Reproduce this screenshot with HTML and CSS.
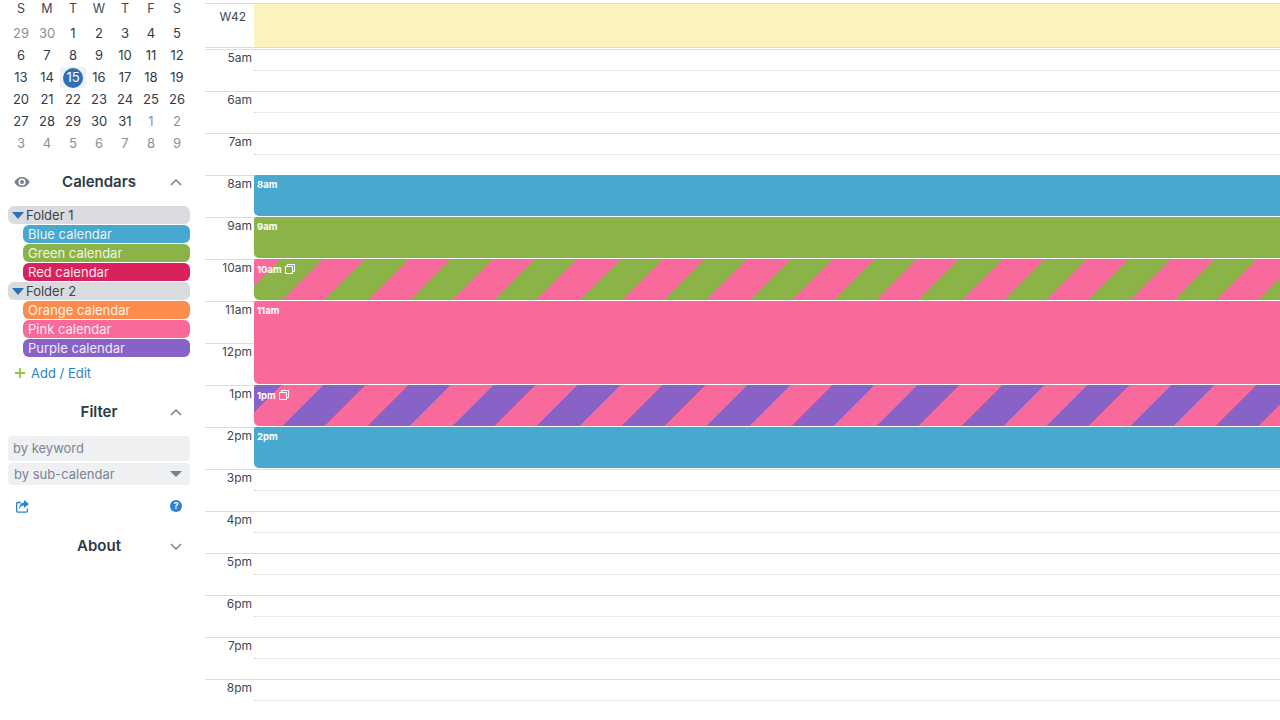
FILE: index.html
```html
<!DOCTYPE html>
<html lang="en">
<head>
<meta charset="utf-8">
<title>Calendar</title>
<link rel="stylesheet" href="styles.css">
</head>
<body>
<div class="app">
  <aside class="sidebar">
    <div class="mini-head"><span>S</span><span>M</span><span>T</span><span>W</span><span>T</span><span>F</span><span>S</span></div>
    <div class="mini-grid">
      <span class="off">29</span><span class="off">30</span><span>1</span><span>2</span><span>3</span><span>4</span><span>5</span>
      <span>6</span><span>7</span><span>8</span><span>9</span><span>10</span><span>11</span><span>12</span>
      <span>13</span><span>14</span><span class="today"><b>15</b></span><span>16</span><span>17</span><span>18</span><span>19</span>
      <span>20</span><span>21</span><span>22</span><span>23</span><span>24</span><span>25</span><span>26</span>
      <span>27</span><span>28</span><span>29</span><span>30</span><span>31</span><span class="off">1</span><span class="off">2</span>
      <span class="off">3</span><span class="off">4</span><span class="off">5</span><span class="off">6</span><span class="off">7</span><span class="off">8</span><span class="off">9</span>
    </div>

    <div class="panel-head calendars-head">
      <svg class="eye" width="16" height="10" viewBox="0 0 16 10"><path fill="#76808f" fill-rule="evenodd" d="M8 0C4.600 0 1.800 2 .3 5c1.500 3 4.300 5 7.700 5s6.200-2 7.700-5C14.200 2 11.400 0 8 0zm0 8.600A3.600 3.600 0 1 1 8 1.400a3.600 3.600 0 0 1 0 7.200zM8 3a2 2 0 1 0 0 4 2 2 0 0 0 0-4z"/></svg>
      <h2>Calendars</h2>
      <svg class="chev" width="12" height="7" viewBox="0 0 12 7"><path d="M1 6l5-5 5 5" fill="none" stroke="#76808f" stroke-width="1.500"/></svg>
    </div>

    <ul class="cal-list">
      <li class="folder"><i class="caret"></i>Folder 1</li>
      <li class="cal blue">Blue calendar</li>
      <li class="cal green">Green calendar</li>
      <li class="cal red">Red calendar</li>
      <li class="folder"><i class="caret"></i>Folder 2</li>
      <li class="cal orange">Orange calendar</li>
      <li class="cal pink">Pink calendar</li>
      <li class="cal purple">Purple calendar</li>
    </ul>

    <div class="add-edit">
      <svg width="10" height="10" viewBox="0 0 10 10"><path d="M5 0v10M0 5h10" stroke="#8cc63f" stroke-width="1.800"/></svg>
      <span>Add / Edit</span>
    </div>

    <div class="panel-head filter-head">
      <h2>Filter</h2>
      <svg class="chev" width="12" height="7" viewBox="0 0 12 7"><path d="M1 6l5-5 5 5" fill="none" stroke="#76808f" stroke-width="1.500"/></svg>
    </div>

    <div class="keyword">by keyword</div>
    <div class="subcal">by sub-calendar<i class="caret-gray"></i></div>

    <div class="tools">
      <svg width="13" height="13" viewBox="0 0 13 13"><path d="M5 2.500H1.500a.8.8 0 0 0-.8.800v8a.8.8 0 0 0 .8.800h9a.8.8 0 0 0 .8-.800V8.500" fill="none" stroke="#2a82d0" stroke-width="1.300"/><path fill="#2a82d0" d="M8 0l5 4-5 4V5.600C5.800 5.600 4.200 6.400 3.300 9.500 3 5.400 4.800 2.700 8 2.400z"/></svg>
      <span class="help">?</span>
    </div>

    <div class="panel-head about-head">
      <h2>About</h2>
      <svg class="chev" width="12" height="7" viewBox="0 0 12 7"><path d="M1 1l5 5 5-5" fill="none" stroke="#76808f" stroke-width="1.500"/></svg>
    </div>
  </aside>

  <main class="main">
    <div class="allday">
      <div class="week">W42</div>
      <div class="allday-band"></div>
    </div>
    <div class="hours">
      <div class="hour"><span>5am</span><i></i></div>
      <div class="hour"><span>6am</span><i></i></div>
      <div class="hour"><span>7am</span><i></i></div>
      <div class="hour"><span>8am</span><i></i></div>
      <div class="hour"><span>9am</span><i></i></div>
      <div class="hour"><span>10am</span><i></i></div>
      <div class="hour"><span>11am</span><i></i></div>
      <div class="hour"><span>12pm</span><i></i></div>
      <div class="hour"><span>1pm</span><i></i></div>
      <div class="hour"><span>2pm</span><i></i></div>
      <div class="hour"><span>3pm</span><i></i></div>
      <div class="hour"><span>4pm</span><i></i></div>
      <div class="hour"><span>5pm</span><i></i></div>
      <div class="hour"><span>6pm</span><i></i></div>
      <div class="hour"><span>7pm</span><i></i></div>
      <div class="hour"><span>8pm</span><i></i></div>
      <div class="events">
        <div class="event ev-blue">8am</div>
        <div class="event ev-green">9am</div>
        <div class="event striped ev-pink-green">10am
          <svg width="10" height="10" viewBox="0 0 10 10"><path d="M.5 2.500h7v7h-7zM2.500 2.500v-2h7v7h-2" fill="none" stroke="#fff" stroke-width="1"/></svg>
        </div>
        <div class="event tall ev-pink">11am</div>
        <div class="event striped ev-pink-purple">1pm
          <svg width="10" height="10" viewBox="0 0 10 10"><path d="M.5 2.500h7v7h-7zM2.500 2.500v-2h7v7h-2" fill="none" stroke="#fff" stroke-width="1"/></svg>
        </div>
        <div class="event ev-blue">2pm</div>
      </div>
    </div>
  </main>
</div>
</body>
</html>
```
FILE: styles.css
```css
* { box-sizing: border-box; }
html, body { margin: 0; height: 720px; overflow: hidden; background: #fff; }
body { font-family: Inter, "Liberation Sans", sans-serif; font-size: 13px; color: #2f3b47; }
h2 { margin: 0; font-size: 15px; font-weight: 600; color: #2b3a47; line-height: 20px; }
ul { list-style: none; margin: 0; padding: 0; }

.app { display: flex; height: 720px; }
.sidebar { flex: 0 0 205px; width: 205px; padding: 0 15px 0 8px; }

.mini-head, .mini-grid { display: grid; grid-template-columns: repeat(7, 26px); text-align: center; }
.mini-head { height: 16px; line-height: 17px; font-size: 12.500px; color: #3d4853; margin-bottom: 6px; }
.mini-grid { grid-auto-rows: 22px; line-height: 22px; font-size: 13px; color: #2f3b47; }
.mini-grid .off { color: #87919e; }
.today { background: #eef0f3; border-radius: 3px; display: flex; align-items: flex-end; justify-content: center; margin-top: 1px; }
.today b { width: 20px; height: 20px; line-height: 19px; border-radius: 50%; background: #2a72b5; color: #fff; font-weight: 400; }

.panel-head { position: relative; height: 20px; text-align: center; }
.panel-head .chev { position: absolute; right: 8px; top: 7px; }
.calendars-head { margin-top: 18px; }
.eye { position: absolute; left: 6px; top: 5px; }
.filter-head { margin-top: 20px; }
.about-head { margin-top: 23px; }

.cal-list { margin-top: 14px; display: flex; flex-direction: column; gap: 1px; }
.folder, .cal { height: 18px; line-height: 18px; border-radius: 6px; }
.folder { background: #d9dbdf; display: flex; align-items: center; color: #3a4450; padding-left: 4px; }
.cal { margin-left: 15px; padding-left: 5px; color: #fff; opacity: 1; }
.caret { width: 0; height: 0; border-left: 6px solid transparent; border-right: 6px solid transparent; border-top: 7px solid #2a72b5; margin-right: 2px; margin-top: 1px; }
.blue { background: #47a9cf; color: #e6f4f9; }
.green { background: #8cb347; color: #eef5e2; }
.red { background: #d9225c; color: #fbe4ec; }
.orange { background: #fb8c4b; color: #fff0e6; }
.pink { background: #f86a9b; color: #ffeaf2; }
.purple { background: #8962c8; color: #efe9f8; }

.add-edit { display: flex; align-items: center; height: 18px; margin-top: 7px; padding-left: 7px; color: #2a82c8; gap: 6px; }

.keyword, .subcal { background: #eff0f2; color: #7a8492; border-radius: 4px; padding-left: 5px; }
.keyword { height: 25px; line-height: 25px; margin-top: 14px; }
.subcal { position: relative; height: 22px; line-height: 23px; margin-top: 2px; padding-left: 6px; }
.caret-gray { position: absolute; right: 8px; top: 8px; width: 0; height: 0; border-left: 6px solid transparent; border-right: 6px solid transparent; border-top: 6px solid #76808f; }

.tools { display: flex; justify-content: space-between; align-items: center; height: 14px; margin-top: 14px; padding: 0 8px; }
.help { width: 12px; height: 12px; line-height: 12px; border-radius: 50%; background: #2a82d0; color: #fff; font-size: 9px; font-weight: 700; text-align: center; }

.main { flex: 1; min-width: 0; padding-top: 3px; }
.allday { display: flex; height: 45px; border-top: 1px solid #dcdcdc; border-bottom: 1px solid #dcdcdc; }
.week { width: 49px; padding: 5px 8px 0 0; text-align: right; line-height: 16px; font-size: 12px; color: #3d4853; }
.allday-band { flex: 1; background: #fbf3bf; }

.hours { position: relative; margin-top: 1px; }
.hour { position: relative; height: 42px; border-top: 1px solid #dcdcdc; }
.hour span { display: block; width: 47px; text-align: right; line-height: 16px; font-size: 12px; color: #3d4853; }
.hour i { position: absolute; left: 49px; right: 0; top: 20px; border-top: 1px dotted #d8d8d8; }

.events { position: absolute; left: 49px; right: 0; top: 126px; display: flex; flex-direction: column; gap: 1px; }
.event { height: 41px; border-radius: 2px 0 0 5px; padding: 3px 3px 0; color: #fff; font-size: 9.500px; font-weight: 700; line-height: 13px; display: block; }
.event.striped { padding-top: 4px; }
.event svg { margin-left: 1px; vertical-align: -1px; }
.event.tall { height: 83px; }
.ev-blue { background: #47a9cf; }
.ev-green { background: #8cb347; }
.ev-pink { background: #f86a9b; }
.ev-pink-green { background: repeating-linear-gradient(135deg, #f86a9b 0, #f86a9b 19.100px, #8cb347 19.100px, #8cb347 49.100px, #f86a9b 49.100px, #f86a9b 60px); }
.ev-pink-purple { background: repeating-linear-gradient(135deg, #8962c8 0, #8962c8 19.100px, #f86a9b 19.100px, #f86a9b 49.100px, #8962c8 49.100px, #8962c8 60px); }
```
